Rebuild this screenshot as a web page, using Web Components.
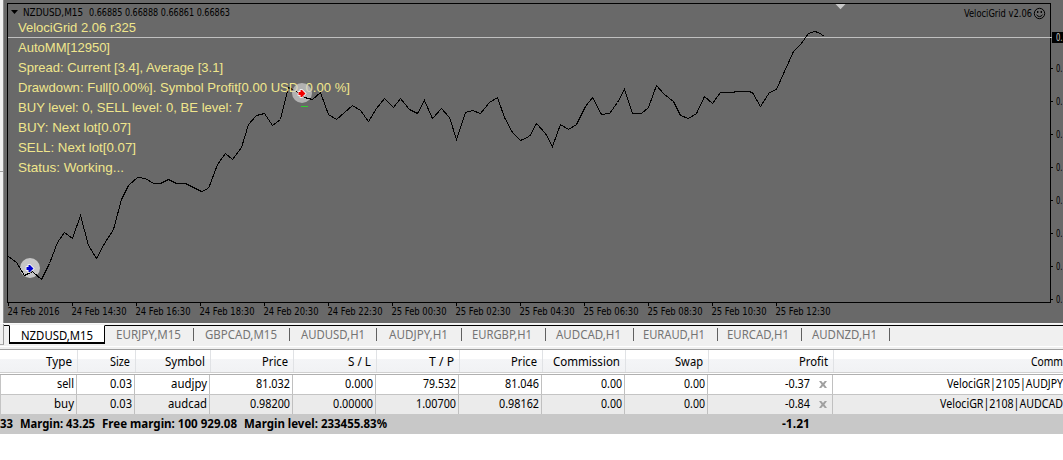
<!DOCTYPE html>
<html lang="en">
<head>
<meta charset="utf-8">
<title>Terminal</title>
<style>
    body {
        margin: 0;
        width: 1063px;
        height: 460px;
        overflow: hidden;
        background: #fff;
        font-family: "Noto Sans", "Open Sans", sans-serif;
        font-size: 12px;
        color: #000;
    }
</style>
</head>
<body>
<trade-terminal></trade-terminal>
<script>
// One line of text set to a fixed width
class FitText extends HTMLElement {
    constructor() {
        super();
        this.attachShadow({ mode: 'open' });
    }

    connectedCallback() {
        const w = this.getAttribute('w');
        this.shadowRoot.innerHTML = `
            <style>
                :host { display: block; flex: none; width: ${w}px; height: 16px; }
                svg { display: block; overflow: visible; }
                text { fill: currentColor; white-space: pre; }
            </style>
            <svg width="${w}" height="16"><text x="0" y="12" textLength="${w}" lengthAdjust="spacingAndGlyphs">${this.getAttribute('text')}</text></svg>
        `;
    }
}
customElements.define('fit-text', FitText);

class PriceChart extends HTMLElement {
    constructor() {
        super();
        this.attachShadow({ mode: 'open' });
    }

    label(x, y, w, text, cls = 'small') {
        return `<text class="${cls}" x="${x}" y="${y}" textLength="${w}" lengthAdjust="spacingAndGlyphs">${text}</text>`;
    }

    // small arrow with a white outline
    arrow(x, y, color) {
        return `<path d="M${x - 3} ${y - 1.5}H${x - 1}V${y - 3.5}H${x + .5}L${x + 4} ${y}L${x + .5} ${y + 3.5}H${x - 1}V${y + 1.5}H${x - 3}Z" fill="${color}" stroke="#fff" stroke-width="1.6" paint-order="stroke"/>`;
    }

    connectedCallback() {
        const line = '8,256 16,262 24,275 32,271 41,279 49,263 57,242 64,232 72,238 80,215 88,245 96,258 104,243 113,229 121,199 128,185 137,177 145,178 153,183 160,183 168,179 176,183 185,183 193,187 201,191 208,188 217,164 225,153 232,159 241,147 248,124 256,115 264,113 272,125 280,119 288,87 296,91 304,97 312,99 320,92 328,114 336,119 344,112 352,105 360,110 368,121 376,108 384,98 393,107 400,98 409,109 417,113 424,100 432,118 441,108 449,117 456,139 465,112 472,110 480,113 489,102 497,97 504,117 512,132 520,140 529,136 536,123 545,133 552,146 560,124 568,129 576,124 585,106 592,97 601,114 609,113 617,102 624,89 632,113 641,113 648,107 656,85 664,94 673,101 680,115 688,118 696,113 704,96 712,103 720,92 732,92 736,91 748,91 752,92 760,106 769,92 776,89 784,71 793,51 800,44 808,33 814,31 818,32 824,36';
        const dates = ['24 Feb 2016', '24 Feb 14:30', '24 Feb 16:30', '24 Feb 18:30', '24 Feb 20:30', '24 Feb 22:30', '25 Feb 00:30', '25 Feb 02:30', '25 Feb 04:30', '25 Feb 06:30', '25 Feb 08:30', '25 Feb 10:30', '25 Feb 12:30'];
        const levels = [68, 101, 134, 167, 200, 233, 266, 299];
        const status = [
            ['VelociGrid 2.06 r325', 118],
            ['AutoMM[12950]', 92],
            ['Spread: Current [3.4], Average [3.1]', 205],
            ['Drawdown: Full[0.00%]. Symbol Profit[0.00 USD, 0.00 %]', 332],
            ['BUY level: 0, SELL level: 0, BE level: 7', 225],
            ['BUY: Next lot[0.07]', 113],
            ['SELL: Next lot[0.07]', 118],
            ['Status: Working...', 106]
        ];

        this.shadowRoot.innerHTML = `
            <style>
                :host { display: block; height: 323px; background: #696969; }
                svg { display: block; }
                text { white-space: pre; }
                .small { font: 10.5px "DejaVu Sans Condensed", "DejaVu Sans", sans-serif; fill: #000; }
                .status { font: 13.3px "Liberation Sans", Arial, sans-serif; fill: #f0e68c; }
            </style>
            <svg width="1063" height="323">
                <rect width="3" height="323" fill="#f2f2f2"/>
                <rect x="3" width="1" height="323" fill="#8c8c8c"/>
                <rect y="171" width="3" height="1" fill="#a0a0a0"/>
                <path d="M7.5 302.5V3.5H1050.5V302.5Z" fill="none" stroke="#000" shape-rendering="crispEdges"/>
                <path d="M8 37.5H1053" stroke="#c0c0c0"/>
                <circle cx="30" cy="268" r="10" fill="#c6c6c6"/>
                <polyline points="${line}" transform="translate(.5 .5)" fill="none" stroke="#000" shape-rendering="crispEdges"/>
                ${this.arrow(29.5, 268.5, '#0000d0')}
                <path d="M835.5 4H845.5L840.5 9.2Z" fill="#c8c8c8"/>
                <path d="M11 10H18L14.5 14Z" fill="#000"/>
                ${this.label(23, 15.5, 60, 'NZDUSD,M15')}
                ${this.label(89, 15.5, 141, '0.66885 0.66888 0.66861 0.66863')}
                ${this.label(964, 16.5, 68, 'VelociGrid v2.06')}
                <g fill="none" stroke="#000">
                    <circle cx="1039.5" cy="13.5" r="5.2"/>
                    <path d="M1036.5 14.8Q1039.5 18.4 1042.5 14.8"/>
                    <path d="M1037.7 11V13M1041.3 11V13" stroke-width="1.3"/>
                </g>
                ${status.map(([t, w], i) => this.label(18, 32 + i * 20, w, t, 'status')).join('')}
                <circle cx="302" cy="93" r="10" fill="#d2d2d2" fill-opacity=".7"/>
                <path d="M296.5 91.5L304.5 97.5L312.5 99.5" fill="none" stroke="#000" shape-rendering="crispEdges"/>
                ${this.arrow(301.5, 93.5, '#f00000')}
                <path d="M301 106.5H308" stroke="#32cd32"/>
                ${dates.map((d, i) => `<path d="M${8.5 + i * 64} 303V306" stroke="#000"/>` + this.label(7.5 + i * 64, 315, i ? 55 : 52, d)).join('')}
                ${levels.map(y => `<path d="M1051 ${y + .5}H1053" stroke="#000"/>` + this.label(1056, y + 4, 6.5, '0.')).join('')}
                <rect x="1052" y="32" width="11" height="11" fill="#000"/>
                <text class="small" x="1056" y="41" textLength="6.5" lengthAdjust="spacingAndGlyphs" style="fill:#ccc">0.</text>
            </svg>
        `;
    }
}
customElements.define('price-chart', PriceChart);

class ChartTabs extends HTMLElement {
    constructor() {
        super();
        this.attachShadow({ mode: 'open' });
    }

    connectedCallback() {
        // name, text width, cell width, left padding
        const tabs = [
            ['EURJPY,M15', 65, 89, 11],
            ['GBPCAD,M15', 72, 96, 11],
            ['AUDUSD,H1', 64, 87, 11],
            ['AUDJPY,H1', 59, 85, 12],
            ['EURGBP,H1', 60, 84, 10],
            ['AUDCAD,H1', 65, 88, 10],
            ['EURAUD,H1', 62, 84, 9],
            ['EURCAD,H1', 62, 84, 9],
            ['AUDNZD,H1', 65, 88, 10]
        ];
        this.shadowRoot.innerHTML = `
            <style>
                :host { display: block; height: 26px; background: #f0f0f0; }
                nav {
                    display: flex;
                    height: 22px;
                    border-top: 1px solid #f8f8f8;
                    border-bottom: 1px solid #fff;
                    box-sizing: content-box;
                }
                .edge {
                    width: 4px;
                    height: 21px;
                    border-right: 1px solid #999;
                    border-bottom: 1px solid #aaa;
                    box-sizing: border-box;
                }
                .bar {
                    display: flex;
                    flex: 1;
                    margin-top: 1px;
                    border-top: 1px solid #000;
                    padding-left: 5px;
                    font-size: 12.5px;
                    color: #747474;
                }
                .active {
                    box-sizing: border-box;
                    width: 96px;
                    height: 19px;
                    margin-top: -1px;
                    padding: 2px 0 0 11px;
                    background: #fff;
                    border: solid #000;
                    border-width: 1px 1px 2px;
                    border-top-color: #fff;
                    color: #000;
                }
                .tab { display: flex; align-items: center; height: 13px; margin-top: 2px; box-sizing: border-box; border-right: 1px solid #606060; }
            </style>
            <nav>
                <div class="edge"></div>
                <div class="bar">
                    <div class="active"><fit-text w="72" text="NZDUSD,M15"></fit-text></div>
                    ${tabs.map(([t, w, c, p]) => `<div class="tab" style="width:${c}px;padding-left:${p}px"><fit-text w="${w}" text="${t}"></fit-text></div>`).join('')}
                </div>
            </nav>
        `;
    }
}
customElements.define('chart-tabs', ChartTabs);

class OrderTable extends HTMLElement {
    constructor() {
        super();
        this.attachShadow({ mode: 'open' });
    }

    row(cls, cells) {
        return `<div class="row ${cls}">${cells.map(([t, w]) => `<div class="cell"><fit-text w="${w}" text="${t}"></fit-text></div>`).join('')}</div>`;
    }

    connectedCallback() {
        const head = [['Type', 26], ['Size', 20], ['Symbol', 40], ['Price', 26], ['S / L', 23], ['T / P', 25], ['Price', 26], ['Commission', 67], ['Swap', 28], ['Profit', 29], ['Comm', 32]];
        const first = [['sell', 17], ['0.03', 22], ['audjpy', 36], ['81.032', 34], ['0.000', 28], ['79.532', 33], ['81.046', 34], ['0.00', 21], ['0.00', 21], ['-0.37', 25], ['VelociGR|2105|AUDJPY', 116]];
        const second = [['buy', 20], ['0.03', 22], ['audcad', 39], ['0.98200', 40], ['0.00000', 40], ['1.00700', 40], ['0.98162', 40], ['0.00', 21], ['0.00', 21], ['-0.84', 25], ['VelociGR|2108|AUDCAD', 123]];
        this.shadowRoot.innerHTML = `
            <style>
                :host { display: block; border-top: 1px solid #a0a0a0; overflow: hidden; }
                .row {
                    display: grid;
                    grid-template-columns: 75px 58px 75px 83px 83px 83px 83px 83px 83px 125px 230px;
                    height: 19px;
                    padding-left: 2px;
                    border-bottom: 1px solid #c4c4c4;
                    box-shadow: inset 2px 0 0 -1px #c4c4c4;
                }
                .cell {
                    display: flex;
                    justify-content: flex-end;
                    border-right: 1px solid #c0c0c0;
                    padding: 1px 2px 0 0;
                    min-width: 0;
                }
                .cell:last-child { border: 0; padding-right: 0; }
                .head {
                    height: 22px;
                    padding-left: 3px;
                    background: linear-gradient(#fff 40%, #f4f5f7 42%, #f1f2f4);
                    border-bottom: 1px solid #d0d0d0;
                    box-shadow: none;
                }
                .head .cell { padding: 4px 5px 0 0; height: 18px; border-color: #e0e2e5; }
                .head .cell:last-child { padding-right: 1px; }
                .line { height: 1px; border-top: 1px solid #fff; background: #b0b0b0; }
                .second { background: #ebebeb; border-bottom: 0; }
                .row:not(.head) .cell:nth-child(10) { padding-right: 22px; position: relative; }
                .row:not(.head) .cell:nth-child(10)::after {
                    content: "";
                    position: absolute;
                    right: 5px;
                    top: 6px;
                    width: 8px;
                    height: 7px;
                    background: #a0a0a0;
                    clip-path: polygon(0 0, 28% 0, 50% 28%, 72% 0, 100% 0, 68% 50%, 100% 100%, 72% 100%, 50% 72%, 28% 100%, 0 100%, 32% 50%);
                }
                .total {
                    display: flex;
                    height: 20px;
                    padding-top: 2px;
                    box-sizing: border-box;
                    background: #c8c8c8;
                    gap: 7px;
                    font-weight: 700;
                }
                .profit { margin-left: 388px; }
            </style>
            ${this.row('head', head)}
            <div class="line"></div>
            ${this.row('first', first)}
            ${this.row('second', second)}
            <div class="total">
                <fit-text w="13" text="33"></fit-text>
                <fit-text w="75" text="Margin: 43.25"></fit-text>
                <fit-text w="135" text="Free margin: 100 929.08"></fit-text>
                <fit-text w="143" text="Margin level: 233455.83%"></fit-text>
                <fit-text class="profit" w="28" text="-1.21"></fit-text>
            </div>
        `;
    }
}
customElements.define('order-table', OrderTable);

class TradeTerminal extends HTMLElement {
    constructor() {
        super();
        this.attachShadow({ mode: 'open' });
    }

    connectedCallback() {
        this.shadowRoot.innerHTML = `
            <style>
                :host { display: flex; flex-direction: column; width: 1063px; }
            </style>
            <price-chart></price-chart>
            <chart-tabs></chart-tabs>
            <order-table></order-table>
        `;
    }
}
customElements.define('trade-terminal', TradeTerminal);
</script>
</body>
</html>
